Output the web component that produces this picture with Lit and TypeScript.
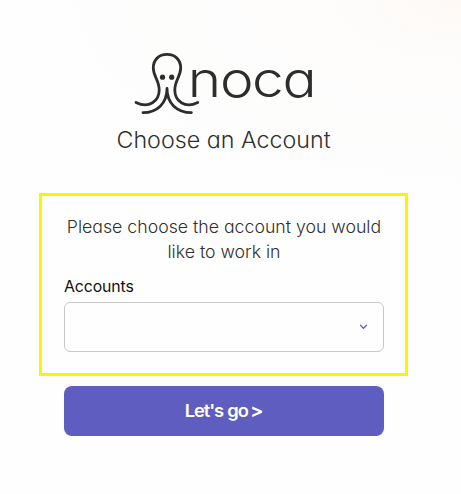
import { LitElement, html, css } from "lit";
import { customElement } from "lit/decorators.js";

@customElement("noca-logo")
class NocaLogo extends LitElement {
  static styles = css`
    :host { display: block; width: 184px; height: 66px; }
    svg { display: block; }
    .stroke { fill: none; stroke: #2d2e2b; stroke-width: 2.8; stroke-linecap: round; stroke-linejoin: round; }
    .eye { fill: #2d2e2b; }
    .word { font-family: Inter, sans-serif; font-weight: 300; font-feature-settings: "cv11"; fill: #2d2e2b; }
  `;
  render() {
    return html`
      <svg width="184" height="66" viewBox="133 50 184 66" role="img" aria-label="noca">
        <path class="stroke" d="M136 102.4C149 109 159.2 101 159.2 90C159.2 80 153.3 76.5 153.3 68C153.3 59.8 159 54.4 167 54.4C175 54.4 180.7 59.8 180.7 68C180.7 76.5 174.8 80 174.8 90C174.8 101 184.8 109 197.8 102.4"/>
        <path class="stroke" d="M143 112.6C157 112.6 167 103.5 167 88.5C167 103.5 177 112.6 191.4 112.6"/>
        <circle class="eye" cx="162.5" cy="77.2" r="2.6"/>
        <circle class="eye" cx="171.7" cy="77.2" r="2.6"/>
        <text class="word" font-size="48.5" transform="scale(1.17 1)" x="160.4 188 215.3 241.5" y="97">noca</text>
      </svg>
    `;
  }
}

@customElement("app-root")
class AppRoot extends LitElement {
  static styles = css`
    :host {
      display: flex; flex-direction: column; align-items: center;
      box-sizing: border-box; width: 461px; height: 494px;
      padding: 50px 14px 0 0;
      background: radial-gradient(ellipse 460px 210px at 100% 0, #fef9f5, #fdfcfb 25%, #fefefe 100%);
      font-family: Inter, sans-serif; font-feature-settings: "cv11"; font-weight: 300; color: #303030;
    }
    noca-logo { margin-left: 2px; }
    h1 { margin: 9px 0 0 1px; font-size: 22.5px; line-height: 30px; font-weight: 300; white-space: nowrap; transform: scaleX(1.034); }
    .panel {
      box-sizing: border-box; width: 369px; height: 183px; margin-top: 38px;
      border: 3px solid #fff200; padding: 18px 21px 0 22px;
      display: flex; flex-direction: column;
    }
    .hint { margin: 0; font-size: 17.3px; line-height: 25px; text-align: center; white-space: nowrap; transform: scaleX(1.024); }
    .label { margin-top: 13px; font-size: 15.3px; line-height: 20px; font-weight: 400; color: #111; letter-spacing: -0.1px; transform: scaleX(1.035); transform-origin: left; }
    .select {
      box-sizing: border-box; width: 320px; height: 50px; margin-top: 5px;
      border: 1px solid #c8c8c8; border-radius: 6px; background: #fefefe;
      display: flex; align-items: center; justify-content: flex-end; padding-right: 15px;
    }
    .chevron { fill: none; stroke: #6560bb; stroke-width: 1.3; stroke-linecap: round; stroke-linejoin: round; }
    .go {
      width: 320px; height: 50px; margin: 10px 0 0 1px; padding: 0;
      border: 0; border-radius: 8px; background: #5f5dc0; color: #fff;
      font: 600 17.3px/48px Inter, sans-serif; font-feature-settings: "cv11", "calt" 0; letter-spacing: -1px;
    }
    .go-text { display: inline-flex; align-items: center; gap: 4px; transform: scaleX(1.06); }
    .arrow { font-size: 19px; margin-left: -2px; }
  `;
  render() {
    return html`
      <noca-logo></noca-logo>
      <h1>Choose an Account</h1>
      <section class="panel">
        <p class="hint">Please choose the account you would<br />like to work in</p>
        <div class="label">Accounts</div>
        <div class="select" role="combobox" aria-label="Accounts">
          <svg width="9" height="6" viewBox="0 0 9 6"><path class="chevron" d="M1.5 1.2L4.5 4.3L7.5 1.2"/></svg>
        </div>
      </section>
      <button class="go"><span class="go-text"><span>Let's</span> <span>go</span> <span class="arrow">&gt;</span></span></button>
    `;
  }
}
